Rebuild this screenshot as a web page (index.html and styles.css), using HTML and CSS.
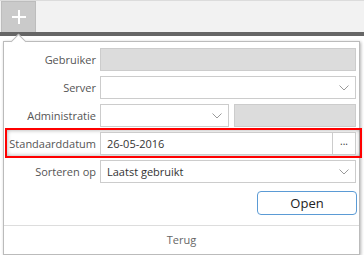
FILE: index.html
```html
<!DOCTYPE html>
<html lang="nl">
<head>
  <meta charset="UTF-8" />
  <title>Inloggen</title>
  <link rel="stylesheet" href="styles.css">
</head>
<body>

  <div class="toolbar">
    <button class="add-btn" aria-label="Toevoegen">
      <svg width="16" height="16" viewBox="0 0 16 16">
        <path d="M8 1v14M1 8h14" stroke="#fff" stroke-width="2" fill="none"/>
      </svg>
    </button>
  </div>
  <div class="darkbar"></div>

  <div class="panel">
    <div class="form">
      <div class="row">
        <label>Gebruiker</label>
        <div class="field disabled"></div>
      </div>
      <div class="row">
        <label>Server</label>
        <div class="field select">
          <span class="value"></span>
          <svg class="chev" width="10" height="6" viewBox="0 0 10 6"><path d="M0.5 0.5L5 5L9.5 0.5" stroke="#9a9a9a" fill="none"/></svg>
        </div>
      </div>
      <div class="row">
        <label>Administratie</label>
        <div class="split">
          <div class="field select small">
            <span class="value"></span>
            <svg class="chev" width="10" height="6" viewBox="0 0 10 6"><path d="M0.5 0.5L5 5L9.5 0.5" stroke="#9a9a9a" fill="none"/></svg>
          </div>
          <div class="field disabled"></div>
        </div>
      </div>
      <div class="row hl">
        <label>Standaarddatum</label>
        <div class="field date">
          <span class="value">26-05-2016</span>
          <span class="dots">...</span>
        </div>
      </div>
      <div class="row">
        <label>Sorteren op</label>
        <div class="field select">
          <span class="value">Laatst gebruikt</span>
          <svg class="chev" width="10" height="6" viewBox="0 0 10 6"><path d="M0.5 0.5L5 5L9.5 0.5" stroke="#9a9a9a" fill="none"/></svg>
        </div>
      </div>
      <div class="actions">
        <button class="open-btn">Open</button>
      </div>
    </div>
    <div class="footer">Terug</div>
  </div>

</body>
</html>
```

FILE: styles.css
```css
body {
  margin: 0;
  background-color: #fff;
  font-family: "Open Sans", Arial, sans-serif;
  font-size: 11px;
  color: #555;
}
.toolbar {
  height: 31px;
  background-color: #f2f2f2;
  border-top: 1px solid #dcdcdc;
  padding-left: 1px;
}
.add-btn {
  width: 35px;
  height: 31px;
  padding: 0;
  border: 1px solid #bdbdbd;
  border-bottom: none;
  background-color: #cacaca;
  display: flex;
  align-items: center;
  justify-content: center;
}
.darkbar {
  height: 4px;
  background-color: #666;
}
.panel {
  position: relative;
  margin: 5px 4px 0 3px;
  border: 1px solid #bbb;
  background-color: #fff;
  box-shadow: 1px 1px 3px rgba(0, 0, 0, 0.3);
}
.panel::before {
  content: "";
  position: absolute;
  left: 9px;
  top: -6px;
  width: 10px;
  height: 10px;
  background-color: #fff;
  border-top: 1px solid #bbb;
  border-left: 1px solid #bbb;
  transform: rotate(45deg);
}
.form {
  display: flex;
  flex-direction: column;
  gap: 5px;
  padding: 6px 3px 10px 0;
}
.row {
  display: flex;
  align-items: center;
  gap: 4px;
  height: 23px;
}
.row label {
  width: 92px;
  flex-shrink: 0;
  text-align: right;
  color: #555;
}
.field {
  flex: 1;
  height: 23px;
  box-sizing: border-box;
  border: 1px solid #ccc;
  background-color: #fff;
  display: flex;
  align-items: center;
  color: #333;
}
.field.disabled { background-color: #dcdcdc; }
.field .value {
  flex: 1;
  padding-left: 6px;
}
.chev { margin-right: 6px; }
.split {
  flex: 1;
  display: flex;
  gap: 5px;
}
.field.small { flex: 0 0 129px; }
.field.date .dots {
  width: 22px;
  height: 100%;
  border-left: 1px solid #ccc;
  text-align: center;
  font-size: 10px;
  line-height: 17px;
  color: #333;
}
.row.hl {
  height: 30px;
  box-sizing: border-box;
  border: 2px solid #f00;
  margin: -4px -6px -3px 1px;
  padding: 2px 4px 1px 0;
  box-shadow: inset 0 0 4px rgba(0, 0, 0, 0.35);
}
.row.hl label { width: 89px; }
.actions {
  display: flex;
  justify-content: flex-end;
  margin-top: 3px;
  margin-right: -1px;
}
.open-btn {
  width: 100px;
  height: 24px;
  background-color: #fff;
  border: 1px solid #5b9bd5;
  border-radius: 4px;
  font-family: "Open Sans", Arial, sans-serif;
  font-size: 13px;
  color: #222;
}
.footer {
  border-top: 1px solid #ddd;
  height: 28px;
  line-height: 28px;
  text-align: center;
  color: #666;
}
```
